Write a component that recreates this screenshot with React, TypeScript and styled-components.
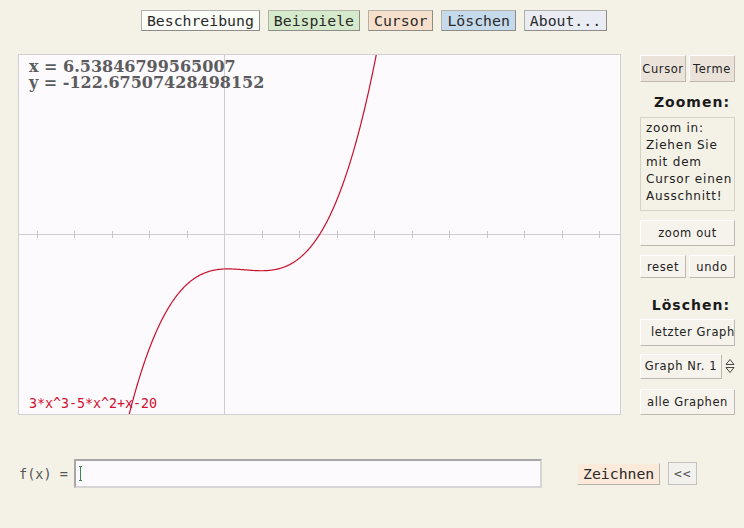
import styled, { createGlobalStyle } from 'styled-components';

const GlobalStyle = createGlobalStyle`
  html, body {
    margin: 0;
    padding: 0;
    background: #f4f1e6;
  }
  body {
    width: 744px;
    height: 528px;
    overflow: hidden;
    font-family: "DejaVu Sans", sans-serif;
  }
`;

const Page = styled.div`
  width: 744px;
  height: 528px;
  padding-top: 10px;
  box-sizing: border-box;
`;

const TopBar = styled.div`
  display: flex;
  justify-content: center;
  gap: 8px;
  padding-left: 4px;
`;

const TopButton = styled.button<{ $bg: string }>`
  height: 21px;
  padding: 0 5px;
  margin: 0;
  background: ${(p) => p.$bg};
  border: 1px solid #b4b1a8;
  border-right-color: #8e8c86;
  border-bottom-color: #8e8c86;
  font-family: "DejaVu Sans Mono", monospace;
  font-size: 14.8px;
  color: #2a2a2a;
  line-height: 19px;
`;

const Main = styled.div`
  display: flex;
  margin-top: 23px;
  padding-left: 18px;
  gap: 19px;
`;

const Plot = styled.div`
  position: relative;
  width: 601px;
  height: 359px;
  border: 1px solid #d2d0d0;
  background: #fdfafd;
  overflow: hidden;
`;

const Coords = styled.div`
  position: absolute;
  left: 10px;
  top: 4px;
  font-family: "DejaVu Serif", serif;
  font-weight: bold;
  font-size: 16px;
  line-height: 16px;
  color: #5c5c5e;
  white-space: pre;
`;

const Formula = styled.div`
  position: absolute;
  left: 10px;
  bottom: 3px;
  font-family: "DejaVu Sans Mono", monospace;
  font-size: 13.3px;
  color: #d0102e;
`;

const Side = styled.div`
  width: 95px;
  display: flex;
  flex-direction: column;
  font-family: "DejaVu Sans", sans-serif;
  font-size: 12px;
  letter-spacing: 0.8px;
  color: #1a1a1a;
`;

const Pair = styled.div<{ $mt?: number }>`
  display: flex;
  gap: 3px;
  margin-top: ${(p) => p.$mt ?? 0}px;
`;

const SideButton = styled.button<{ $h: number; $mt?: number; $bg?: string; $align?: string }>`
  flex: 1;
  height: ${(p) => p.$h}px;
  margin: ${(p) => p.$mt ?? 0}px 0 0 0;
  padding: 0 0 0 ${(p) => (p.$align === 'left' ? 10 : 0)}px;
  background: ${(p) => p.$bg ?? '#f6f3ec'};
  border: 1px solid #ffffff;
  border-right-color: #bdb9b0;
  border-bottom-color: #bdb9b0;
  font-family: inherit;
  font-size: 11.5px;
  letter-spacing: 0.6px;
  color: #222;
  text-align: ${(p) => p.$align ?? 'center'};
  white-space: nowrap;
  overflow: hidden;
`;

const Heading = styled.div<{ $mt: number }>`
  margin-top: ${(p) => p.$mt}px;
  font-weight: bold;
  font-size: 14px;
  letter-spacing: 1px;
  text-align: right;
  padding-right: 5px;
  line-height: 17px;
`;

const InfoBox = styled.div`
  margin-top: 6px;
  height: 94px;
  box-sizing: border-box;
  border: 1px solid #d6d2c6;
  padding: 2px 0 0 5px;
  line-height: 17px;
  color: #222;
`;

const SelectRow = styled.div`
  display: flex;
  align-items: center;
  gap: 3px;
  margin-top: 8px;
`;

const Spinner = styled.svg`
  width: 10px;
  height: 18px;
  flex: none;
`;

const Bottom = styled.div`
  display: flex;
  align-items: center;
  margin-top: 44px;
  padding-left: 19px;
`;

const Label = styled.span`
  font-family: "DejaVu Sans Mono", monospace;
  font-size: 13.5px;
  color: #555555;
  width: 55px;
`;

const InputWrap = styled.div`
  position: relative;
`;

const FnInput = styled.input`
  width: 468px;
  height: 29px;
  box-sizing: border-box;
  margin: 0;
  border: 2px solid #a8a6a6;
  border-right-color: #d6d4d4;
  border-bottom-color: #d6d4d4;
  background: #fdfafd;
  outline: none;
`;

const Caret = styled.div`
  position: absolute;
  left: 6px;
  top: 7px;
  width: 1px;
  height: 15px;
  background: #3a8a4a;
  &::before,
  &::after {
    content: '';
    position: absolute;
    left: -1px;
    width: 3px;
    height: 1px;
    background: #3a8a4a;
  }
  &::before {
    top: 0;
  }
  &::after {
    bottom: 0;
  }
`;

const DrawButton = styled.button`
  margin-left: 35px;
  height: 22px;
  padding: 0 5px;
  background: #fbe9d9;
  border: 1px solid #f4f0ea;
  border-right-color: #b8b2aa;
  border-bottom-color: #b8b2aa;
  font-family: "DejaVu Sans Mono", monospace;
  font-size: 14.8px;
  color: #2a2a2a;
`;

const BackButton = styled.button`
  margin-left: 8px;
  width: 29px;
  height: 23px;
  padding: 0;
  background: #f2f1ee;
  border: 1px solid #c4c2be;
  font-family: "DejaVu Sans Mono", monospace;
  font-size: 13px;
  letter-spacing: 1px;
  color: #555;
`;

const W = 601;
const H = 359;
const OX = 205;
const OY = 179;
const SX = 37.5;
const SY = 1.75;

const f = (x: number) => 3 * x ** 3 - 5 * x ** 2 + x - 20;

function curvePath() {
  const pts: string[] = [];
  for (let px = 0; px <= W; px += 0.5) {
    const x = (px - OX) / SX;
    let py = OY - f(x) * SY;
    py = Math.max(-50, Math.min(H + 50, py));
    pts.push(`${px.toFixed(1)},${py.toFixed(2)}`);
  }
  return 'M' + pts.join(' L');
}

function Graph() {
  const ticks: number[] = [];
  for (let k = -6; k <= 11; k++) {
    const x = OX + k * SX;
    if (x > 5 && x < W - 5 && k !== 0) ticks.push(x);
  }
  return (
    <svg width={W} height={H} style={{ display: 'block' }}>
      <line x1={0} y1={OY + 0.5} x2={W} y2={OY + 0.5} stroke="#d0ccd2" />
      <line x1={OX + 0.5} y1={0} x2={OX + 0.5} y2={H} stroke="#d0ccd2" />
      {ticks.map((x) => (
        <line
          key={x}
          x1={Math.round(x) + 0.5}
          y1={OY - 3}
          x2={Math.round(x) + 0.5}
          y2={OY + 4}
          stroke="#c8c4cc"
        />
      ))}
      <path d={curvePath()} fill="none" stroke="#c8102e" strokeWidth={1.2} />
    </svg>
  );
}

export default function App() {
  return (
    <>
      <GlobalStyle />
      <Page>
        <TopBar>
          <TopButton $bg="#fbfdf8">Beschreibung</TopButton>
          <TopButton $bg="#d5e9cb">Beispiele</TopButton>
          <TopButton $bg="#f6dfcb">Cursor</TopButton>
          <TopButton $bg="#c5daea">Löschen</TopButton>
          <TopButton $bg="#e9edf3">About...</TopButton>
        </TopBar>

        <Main>
          <Plot>
            <Graph />
            <Coords>{'x = 6.53846799565007\ny = -122.67507428498152'}</Coords>
            <Formula>3*x^3-5*x^2+x-20</Formula>
          </Plot>

          <Side>
            <Pair $mt={1}>
              <SideButton $h={27} $bg="#ebe2da">Cursor</SideButton>
              <SideButton $h={27} $bg="#ebe2da">Terme</SideButton>
            </Pair>
            <Heading $mt={12}>Zoomen:</Heading>
            <InfoBox>
              zoom in:
              <br />
              Ziehen Sie
              <br />
              mit dem
              <br />
              Cursor einen
              <br />
              Ausschnitt!
            </InfoBox>
            <SideButton $h={25} $mt={9}>zoom out</SideButton>
            <Pair $mt={9}>
              <SideButton $h={23}>reset</SideButton>
              <SideButton $h={23}>undo</SideButton>
            </Pair>
            <Heading $mt={19}>Löschen:</Heading>
            <SideButton $h={27} $mt={5} $align="left">letzter Graph</SideButton>
            <SelectRow>
              <SideButton $h={25}>Graph Nr. 1</SideButton>
              <Spinner viewBox="0 0 10 18">
                <path d="M1 7.5 L5 2.5 L9 7.5 Z" fill="none" stroke="#333" strokeWidth="0.9" />
                <path d="M1 10.5 L5 15.5 L9 10.5 Z" fill="none" stroke="#333" strokeWidth="0.9" />
              </Spinner>
            </SelectRow>
            <SideButton $h={25} $mt={10}>alle Graphen</SideButton>
          </Side>
        </Main>

        <Bottom>
          <Label>f(x) =</Label>
          <InputWrap>
            <FnInput />
            <Caret />
          </InputWrap>
          <DrawButton>Zeichnen</DrawButton>
          <BackButton>&lt;&lt;</BackButton>
        </Bottom>
      </Page>
    </>
  );
}
